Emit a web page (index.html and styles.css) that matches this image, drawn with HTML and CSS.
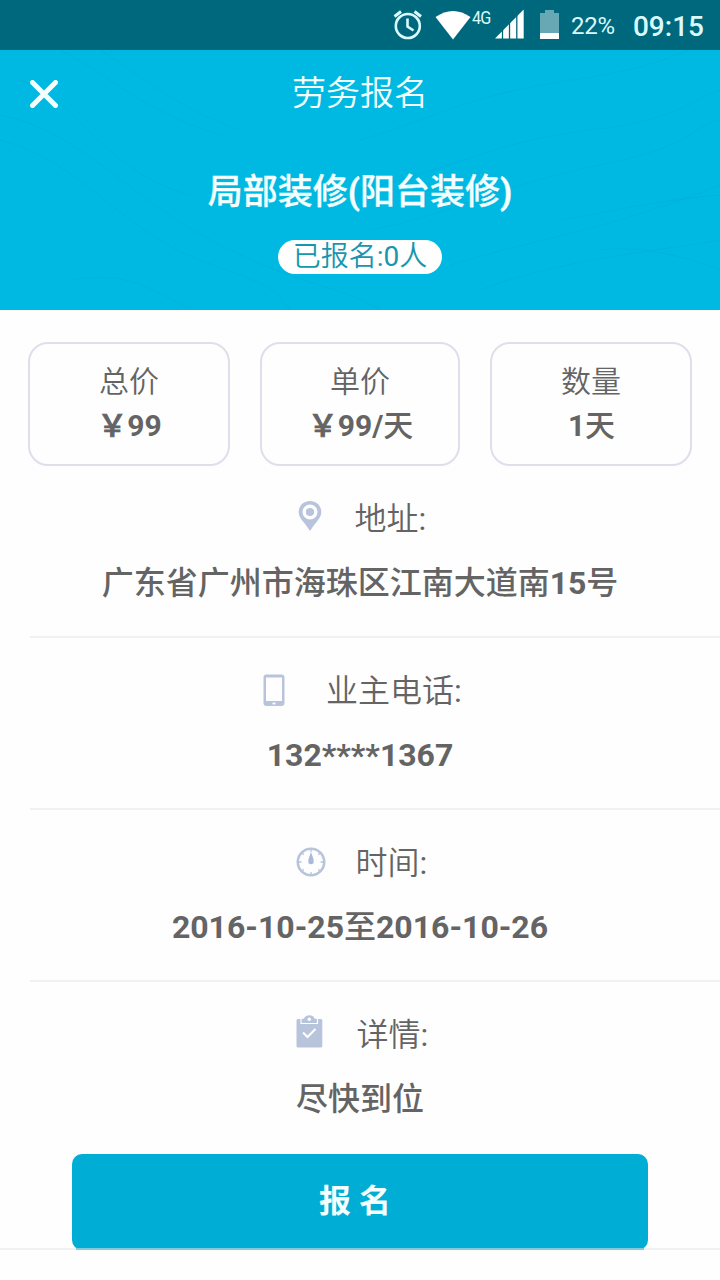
FILE: index.html
```html
<!DOCTYPE html>
<html lang="zh-CN">
<head>
<meta charset="utf-8">
<title>劳务报名</title>
<link rel="stylesheet" href="styles.css">
</head>
<body>
<div class="statusbar">
  <svg class="status-icons" width="180" height="50" viewBox="390 0 180 50">
    <g fill="none" stroke="#d9fbff" stroke-width="2.6">
      <circle cx="407.8" cy="26" r="12"/>
      <path d="M407.5 18.500V26.500L413.500 30.500"/>
      <path d="M394.500 16.500L401 11.500M414.500 11.500L421 16.500" stroke-width="3"/>
    </g>
    <path fill="#fff" d="M435.500 17Q453 5 470.500 17L453 39.500Z"/>
    <path fill="#fff" d="M523.700 9.500V38.500H495Z"/>
    <path stroke="#00687c" stroke-width="1.300" d="M502.500 28V39M509.500 20V39M516.800 14V39"/>
    <path fill="#68a8b4" d="M540 13H545V10H554V13H559V33H540Z"/>
    <path fill="#fff" d="M540 33H559V39H540Z"/>
  </svg>
  <span class="network">4G</span>
  <span class="battery">22%</span>
  <span class="clock">09:15</span>
</div>
<header class="hero">
  <svg class="waves" width="720" height="260" viewBox="0 0 720 260">
    <path d="M0 65C80 80 130 150 220 195S340 235 380 260M0 90C80 110 120 180 200 210S270 235 290 260M60 0C110 25 140 60 220 85M100 0C140 25 180 60 240 80M360 90C430 70 470 45 560 32S660 10 690 0M360 140C450 120 500 90 590 80S690 50 720 40M370 180C450 165 500 135 600 115S690 75 720 70M450 215C530 190 610 180 720 135M480 240C560 210 630 205 720 190M560 170C620 160 660 150 720 145M600 200C640 195 680 205 720 220M70 230C130 220 150 240 190 258M20 30C80 50 100 120 190 145"/>
  </svg>
  <div class="navbar">
    <svg class="close" width="28" height="28" viewBox="0 0 28 28"><path d="M2.500 2.500L25.500 25.500M25.500 2.500L2.500 25.500"/></svg>
    <span class="nav-title">劳务报名</span>
  </div>
  <h1 class="job">局部装修(阳台装修)</h1>
  <span class="pill">已报名:0人</span>
</header>
<section class="cards">
  <div class="card"><span>总价</span><b><span class="yen">￥</span>99</b></div>
  <div class="card"><span>单价</span><b><span class="yen">￥</span>99/天</b></div>
  <div class="card"><span>数量</span><b>1天</b></div>
</section>
<main class="details">
  <section class="item">
    <div class="label">
      <svg class="icon icon-pin" width="24" height="32" viewBox="0 0 24 32">
        <path fill="#b7c4dc" d="M12 1C5.500 1 .700 5.800.700 12C.700 18 6 21.500 12 31C18 21.500 23.300 18 23.300 12C23.300 5.800 18.500 1 12 1Z"/>
        <circle cx="12" cy="12" r="5.800" fill="none" stroke="#fff" stroke-width="3.400"/>
      </svg>
      <span>地址:</span>
    </div>
    <div class="value">广东省广州市海珠区江南大道南15号</div>
  </section>
  <section class="item">
    <div class="label">
      <svg class="icon icon-phone" width="22" height="33" viewBox="0 0 22 33">
        <path fill="#b7c4dc" fill-rule="evenodd" d="M3.500 .500H18.500Q21.500 .500 21.500 3.500V29Q21.500 32 18.500 32H3.500Q.500 32 .500 29V3.500Q.500 .500 3.500 .500ZM3 3.500V27H19V3.500Z"/>
        <path stroke="#fff" stroke-width="1.800" d="M9.500 29.500H12.500"/>
      </svg>
      <span>业主电话:</span>
    </div>
    <div class="value">132****1367</div>
  </section>
  <section class="item">
    <div class="label">
      <svg class="icon icon-clock" width="30" height="30" viewBox="0 0 30 30">
        <circle cx="15" cy="15" r="13.200" fill="none" stroke="#b7c4dc" stroke-width="2.600"/>
        <path stroke="#b7c4dc" stroke-width="1.300" d="M15 2V5M15 25V28M2 15H5.500M24.500 15H28M5.800 5.800L7.700 7.700M24.200 5.800L22.300 7.700M5.800 24.200L7.700 22.300M24.200 24.200L22.300 22.300"/>
        <path fill="#a9bad8" d="M15 5L17.600 12.500V16Q15 18.500 12.400 16V12.500Z"/>
      </svg>
      <span>时间:</span>
    </div>
    <div class="value">2016-10-25至2016-10-26</div>
  </section>
  <section class="item">
    <div class="label">
      <svg class="icon icon-board" width="27" height="33" viewBox="0 0 27 33">
        <path fill="#b7c4dc" d="M2 4H25Q26.300 4 26.300 5.500V31Q26.300 32.500 25 32.500H2Q.500 32.500 .500 31V5.500Q.500 4 2 4Z"/>
        <path fill="#b7c4dc" d="M5.500 8V5Q5.500 3.500 8 3.500Q9.500 .300 13.500 .300T18.500 3.500Q21 3.500 21 5V8Z"/>
        <path fill="none" stroke="#fff" stroke-width="1.200" d="M5 4V8.500H21.500V4"/>
        <circle cx="13.300" cy="4.200" r="1.700" fill="#fff"/>
        <path fill="none" stroke="#fff" stroke-width="2" d="M7 17.500L11.500 22L19.500 14"/>
      </svg>
      <span>详情:</span>
    </div>
    <div class="value">尽快到位</div>
    <button class="submit">报 名</button>
  </section>
</main>
</body>
</html>
```
FILE: styles.css
```css
* { box-sizing: border-box; }
body {
  margin: 0;
  width: 720px;
  height: 1280px;
  overflow: hidden;
  background: #fefefe;
  color: #646464;
  font-family: Roboto, "Noto Sans CJK SC DemiLight", "Noto Sans CJK SC", sans-serif;
}
.statusbar {
  position: relative;
  display: flex;
  align-items: center;
  height: 50px;
  padding: 2px 16px 0 390px;
  background: #00687c;
  color: #d9fbff;
  white-space: nowrap;
}
.status-icons { flex: none; margin-top: -2px; }
.network {
  position: absolute;
  left: 472px;
  top: 8px;
  font-size: 18px;
  line-height: 20px;
  letter-spacing: -1px;
  transform: scaleX(.9);
  transform-origin: left;
}
.battery { font-size: 24px; letter-spacing: -.3px; margin-left: 1px; }
.clock { margin-left: auto; font-size: 28px; font-weight: 500; }
.hero {
  position: relative;
  display: flex;
  flex-direction: column;
  align-items: center;
  height: 260px;
  background: #00b9e2;
  color: #f4ffff;
}
.waves { position: absolute; inset: 0; fill: none; stroke: #00a3ce; stroke-opacity: .3; }
.navbar {
  position: relative;
  display: grid;
  grid-template-columns: 28px 1fr 28px;
  align-items: center;
  width: 100%;
  height: 88px;
  padding: 0 30px;
}
.close { stroke: #f4ffff; stroke-width: 5; stroke-linecap: round; }
.nav-title { text-align: center; font-size: 34px; line-height: 50px; padding-bottom: 2px; }
.job {
  position: relative;
  margin: 30px 0 0;
  font-family: Roboto, "Noto Sans CJK SC Medium", "Noto Sans CJK SC", sans-serif;
  font-size: 35px;
  line-height: 50px;
  -webkit-text-stroke: .3px;
}
.pill {
  position: relative;
  width: 164px;
  height: 34px;
  margin-top: 22px;
  border-radius: 17px;
  background: #fff;
  color: #1796ad;
  text-align: center;
  font-size: 28px;
  line-height: 34px;
}
.cards {
  display: grid;
  grid-template-columns: 202px 200px 202px;
  justify-content: space-between;
  padding: 32px 28px 0;
}
.card {
  display: flex;
  flex-direction: column;
  align-items: center;
  height: 124px;
  padding-top: 16px;
  border: 2px solid #dedfea;
  border-radius: 20px;
  font-size: 30px;
  line-height: 44px;
}
.card b, .value {
  font-family: Roboto, "Noto Sans CJK SC Medium", "Noto Sans CJK SC", sans-serif;
  font-weight: 700;
}
.card b { padding-left: 1px; }
.yen { -webkit-text-stroke: .9px; }
.item {
  height: 172px;
  margin-left: 30px;
  padding: 27px 30px 0 0;
  border-bottom: 2px solid #f1f1f1;
  text-align: center;
}
.label {
  display: flex;
  justify-content: center;
  height: 52px;
  font-size: 32px;
  line-height: 52px;
}
.value { font-size: 32px; line-height: 52px; margin-top: 12px; }
.icon { flex: none; }
.icon-pin { margin: 7px 33px 0 4px; }
.icon-phone { margin: 9px 41px 0 5px; }
.icon-clock { margin: 10px 30px 0 3px; }
.icon-board { margin: 6px 34px 0 4px; }
.item:last-child {
  position: relative;
  height: 268px;
  margin-left: 0;
  padding-right: 0;
}
.item:last-child::after {
  content: "";
  position: absolute;
  left: 76px;
  right: 76px;
  bottom: -2px;
  height: 2px;
  background: #80cbdc;
}
.submit {
  display: block;
  width: 576px;
  height: 96px;
  margin: 29px auto 0;
  padding: 0 10px 2px 0;
  border: 0;
  border-radius: 10px;
  background: #00add5;
  color: #f4ffff;
  font: 700 32px/50px Roboto, "Noto Sans CJK SC", sans-serif;
}
```
